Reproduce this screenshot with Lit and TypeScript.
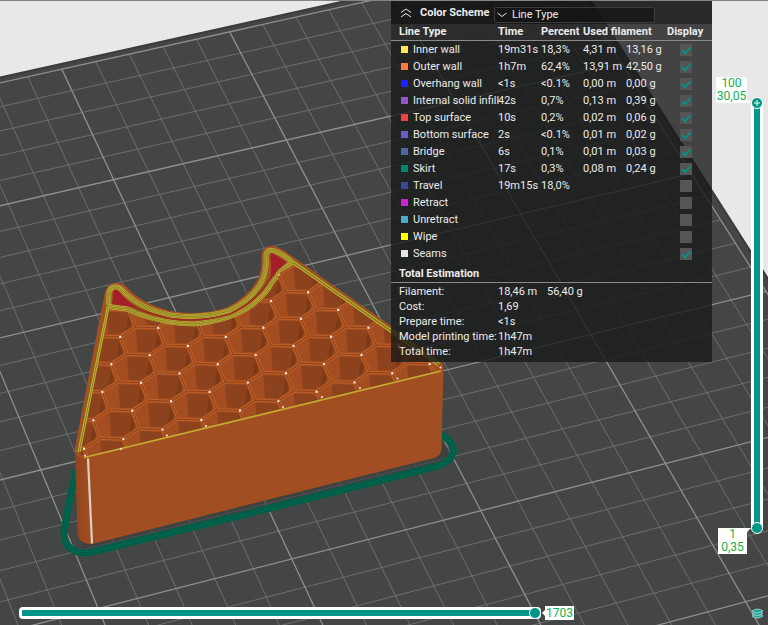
import { LitElement, html, svg, css } from "lit";
import { customElement, state } from "lit/decorators.js";

type Pt = [number, number];
type Anchor = [number, number, number, number];

/** Least-squares plane projection (u, v) -> (x, y) from a set of anchors. */
function project(anchors: Anchor[]): (u: number, v: number) => Pt {
  const m = Array.from({ length: 8 }, () => new Array<number>(9).fill(0));
  const add = (r: number[], rhs: number) => {
    for (let i = 0; i < 8; i++) {
      for (let j = 0; j < 8; j++) m[i][j] += r[i] * r[j];
      m[i][8] += r[i] * rhs;
    }
  };
  for (const [u, v, px, py] of anchors) {
    const x = px / 400;
    const y = py / 400;
    add([u, v, 1, 0, 0, 0, -u * x, -v * x], x);
    add([0, 0, 0, u, v, 1, -u * y, -v * y], y);
  }
  for (let i = 0; i < 8; i++) {
    let p = i;
    for (let r = i + 1; r < 8; r++) if (Math.abs(m[r][i]) > Math.abs(m[p][i])) p = r;
    [m[i], m[p]] = [m[p], m[i]];
    for (let r = 0; r < 8; r++) {
      if (r === i) continue;
      const f = m[r][i] / m[i][i];
      for (let c = i; c < 9; c++) m[r][c] -= f * m[i][c];
    }
  }
  const k = m.map((row, i) => row[8] / row[i]);
  return (u, v) => {
    const w = k[6] * u + k[7] * v + 1;
    return [((k[0] * u + k[1] * v + k[2]) / w) * 400, ((k[3] * u + k[4] * v + k[5]) / w) * 400];
  };
}

/** Build plate: one unit is five grid cells. */
const bed = project([
  [1, -1, 61.7, 69.3], [2, -1, 229.3, 32.3], [1, 0, 113.3, 179.3], [2, 0, 286.7, 140],
  [1, 1, 170, 296.7], [2, 1, 346.7, 255.7], [2, 3, 481, 510.7], [3, 3, 666, 464],
  [3, 4, 745, 601.7], [0, 2, 41, 470.5], [3, 2, 591, 334], [1, 3, 291, 559],
]);

/** Honeycomb infill: one unit is one cell. */
const comb = project([
  [0, -1, 120.3, 336.7], [4, -1, 271, 301], [5, -1, 308.3, 292.3], [0, 0, 111.3, 364.3],
  [4, 0, 263.3, 328], [6, 0, 338.3, 310], [0, 1, 102.5, 392], [3, 1, 217.7, 364.3],
  [7, 1, 368.3, 327.7], [0, 2, 93.3, 420], [0, 3, 84.3, 449], [1, 3, 123.3, 439],
  [6, 3, 316.7, 392], [9, 3, 429.7, 363.7],
]);

const f = (p: Pt) => `${p[0].toFixed(1)},${p[1].toFixed(1)}`;
const poly = (...pts: Pt[]) => `M${pts.map(f).join("L")}Z`;
const seg = (a: Pt, b: Pt) => `M${f(a)}L${f(b)}`;

const BED_U = 4;
const BED_V = -1;

function gridPaths() {
  let thin = "";
  let bold = "";
  for (let i = -25; i <= BED_U * 5; i++) {
    const s = seg(bed(i / 5, BED_V), bed(i / 5, 5.4));
    if (i % 5 === 0) bold += s;
    else thin += s;
  }
  for (let j = BED_V * 5; j <= 32; j++) {
    const s = seg(bed(-5, j / 5), bed(BED_U, j / 5));
    if (j % 5 === 0) bold += s;
    else thin += s;
  }
  return { thin, bold };
}

function combPaths() {
  let far = "";
  let side = "";
  let edge = "";
  let dots = "";
  for (let j = -5; j <= 6; j++) {
    for (let i = -4; i <= 12; i++) {
      const a = comb(i, j);
      const b = comb(i + 0.35, j - 0.25);
      const c = comb(i + 1, j);
      const d = comb(i + 1.35, j + 0.75);
      const e = comb(i + 1, j + 1);
      const g = comb(i + 0.35, j + 0.75);
      far += poly(b, c, [c[0] - 4, e[1] - 2], e, [b[0] + 2, g[1]]);
      side += poly(c, [c[0] + 4, c[1] + 9], [c[0] + 1, e[1] - 6], [c[0] - 4, e[1] - 2]);
      edge += poly(a, b, c, d, e, g);
      dots += `M${f(a)}h0.01`;
    }
  }
  return { far, side, edge, dots };
}

const GRID = gridPaths();
const COMB = combPaths();
const PLATE = poly(bed(-5, -1.045), bed(4.05, -1.045), bed(4.05, 5.5), bed(-5, 5.5));

const TOP =
  "M75 450L104.500 297Q106 284 115 283.500Q123 283 127 288Q141 304 170 311.500Q200 317 227 308Q250 296 258.500 279Q263 269 262 258Q261 247 271 246.500Q277 246 284 251L440 361Q445 366 442 371.500L88 458Q76 459 75 450Z";
const INNER =
  "M78.500 450L107 307L126 310.500L135 315Q165 327 196 326Q233 322 255 307Q270 294 274 283L279 278.500L278 274L296 263.500L439 366L441 370L88 456L80 455Z";
const UPPER_BAND =
  "M108.500 305L109 293Q110 287 115.500 287Q120 287 124 292Q140 308.500 170 315Q200 319.500 229 311Q253 299 262 281Q267 270 266 257Q266 250 271 250.500Q277 250 291 261";
const LOWER_BAND =
  "M108 306.500L127 309L137 313.500Q166 324 194 324Q230 321 252 305Q268 292 272 282L276 277.500L275.500 272.500L293 262";
const RED_LINE = "M130 305Q147 314 170 318.500Q200 323 230 314Q255 302 267 284L273 274";
const SKIRT =
  "M76 470Q69 500 65 526Q62 540 69 547Q76 554 90 552.500L241 515.500L438 466Q452 461 453.500 451Q453 441 441 435";

interface Row {
  name: string;
  color: string;
  time?: string;
  percent?: string;
  metres?: string;
  grams?: string;
  shown: boolean;
}

const ROWS: Row[] = [
  { name: "Inner wall", color: "#ffe64d", time: "19m31s", percent: "18,3%", metres: "4,31 m", grams: "13,16 g", shown: true },
  { name: "Outer wall", color: "#ff7d38", time: "1h7m", percent: "62,4%", metres: "13,91 m", grams: "42,50 g", shown: true },
  { name: "Overhang wall", color: "#1f1fff", time: "<1s", percent: "<0.1%", metres: "0,00 m", grams: "0,00 g", shown: true },
  { name: "Internal solid infill", color: "#9654cc", time: "42s", percent: "0,7%", metres: "0,13 m", grams: "0,39 g", shown: true },
  { name: "Top surface", color: "#f04040", time: "10s", percent: "0,2%", metres: "0,02 m", grams: "0,06 g", shown: true },
  { name: "Bottom surface", color: "#665cc7", time: "2s", percent: "<0.1%", metres: "0,01 m", grams: "0,02 g", shown: true },
  { name: "Bridge", color: "#4d66a6", time: "6s", percent: "0,1%", metres: "0,01 m", grams: "0,03 g", shown: true },
  { name: "Skirt", color: "#00876e", time: "17s", percent: "0,3%", metres: "0,08 m", grams: "0,24 g", shown: true },
  { name: "Travel", color: "#38489b", time: "19m15s", percent: "18,0%", shown: false },
  { name: "Retract", color: "#cd22d6", shown: false },
  { name: "Unretract", color: "#49adcf", shown: false },
  { name: "Wipe", color: "#ffff00", shown: false },
  { name: "Seams", color: "#e6e6e6", shown: true },
];

const TOTALS: string[][] = [
  ["Filament:", "18,46 m", "56,40 g"],
  ["Cost:", "1,69"],
  ["Prepare time:", "<1s"],
  ["Model printing time:", "1h47m"],
  ["Total time:", "1h47m"],
];

@customElement("plate-scene")
class PlateScene extends LitElement {
  static styles = css`
    :host { display: block; background: #e8e8e8; }
    svg { display: block; width: 100%; height: 100%; }
  `;

  render() {
    return html`<svg viewBox="0 0 768 625" preserveAspectRatio="xMidYMid slice" aria-hidden="true">
      ${svg`
      <defs>
        <clipPath id="inner"><path d=${INNER} /></clipPath>
        <linearGradient id="face" x1="75" x2="100" y1="0" y2="0" gradientUnits="userSpaceOnUse">
          <stop offset="0" stop-color="#8f451d" />
          <stop offset="0.5" stop-color="#a04c20" />
          <stop offset="1" stop-color="#a04e22" />
        </linearGradient>
      </defs>
      <path d=${PLATE} fill="#444645" stroke="#3a3c3b" stroke-width="2" />
      <path d=${GRID.thin} fill="none" stroke="#717372" stroke-width="0.9" />
      <path d=${GRID.bold} fill="none" stroke="#8d8f8e" stroke-width="1.3" />
      <path d="M78 470L82 549L104 549L444 464L450 450L441 440Z" fill="#3c3e3d" opacity="0.6" />
      <g fill="none" stroke-linejoin="round">
        <path d=${SKIRT} stroke="#00634c" stroke-width="7" />
        <path d=${SKIRT} stroke="#005340" stroke-width="4.400" />
        <path d=${SKIRT} stroke="#006b53" stroke-width="3" />
        <path d=${SKIRT} stroke="#005340" stroke-width="0.800" />
      </g>
      <path d="M75 450L77.500 534Q79 544 92 544L434 458Q441 456 441.500 449L443.500 368L88 452Z" fill="url(#face)" />
      <path d=${TOP} fill="#a64f22" stroke="#a9521f" stroke-width="1" />
      <g clip-path="url(#inner)">
        <path d=${INNER} fill="#a34d20" />
        <path d=${COMB.far} fill="#8b421d" />
        <path d=${COMB.side} fill="#7d3a17" />
        <path d=${COMB.edge} fill="none" stroke="#a34d20" stroke-width="5" />
        <path d=${COMB.edge} fill="none" stroke="#bf602b" stroke-width="3.200" />
        <path d=${COMB.edge} fill="none" stroke="#934519" stroke-width="1.200" />
        <path d=${COMB.dots} fill="none" stroke="#f3e9e2" stroke-width="2.400" stroke-linecap="round" />
      </g>
      <g fill="none" stroke-linejoin="round">
        <path d="M78.500 452L108 306" stroke="#7d6a1c" stroke-width="3.600" />
        <path d="M78 452L107.500 306M80 452L109 307" stroke="#bfb035" stroke-width="1.200" />
        <path d="M291 260L439 364" stroke="#7d6a1c" stroke-width="3.400" />
        <path d="M291 259.500L439.500 363.500M290 261.500L438 365.500" stroke="#bfb035" stroke-width="1.100" />
        <path d="M84 457.500L441 371" stroke="#c0ae31" stroke-width="1.600" />
        <path d=${RED_LINE} stroke="#8c5a1c" stroke-width="6" />
        ${[UPPER_BAND, LOWER_BAND].map(
          (d) => svg`
          <path d=${d} stroke="#bdb038" stroke-width="5" />
          <path d=${d} stroke="#85741f" stroke-width="3.600" />
          <path d=${d} stroke="#bdb038" stroke-width="2.400" />
          <path d=${d} stroke="#85741f" stroke-width="0.800" />`
        )}
        <path d=${RED_LINE} stroke="#a3291f" stroke-width="1.600" />
      </g>
      <path d="M114 290Q117 288 120 293Q127 302 137 307L130 306.500L112 304Z" fill="#a41f2a" />
      <path d="M271.500 252.500L287 262.500L278 270L270 281Q272 268 270.500 258Z" fill="#a41f2a" />
      <path d="M88 458.500L92 543.500" stroke="#d9cfc6" stroke-width="2.200" fill="none" />
      <path d="M85 455.500h0.010M121 449h0.010M167 435.500h0.010M206 426h0.010M283 407h0.010M322 397h0.010M360 388h0.010M397.500 378.500h0.010M440.500 367.500h0.010" stroke="#f3e9e2" stroke-width="2" stroke-linecap="round" />
      <path d="M0 0.500H768" stroke="#858585" stroke-width="1" />`}
    </svg>`;
  }
}

@customElement("legend-panel")
class LegendPanel extends LitElement {
  @state() private rows = ROWS;

  static styles = css`
    :host {
      display: block;
      width: 321px;
      color: #ececec;
      background: rgba(25, 25, 25, 0.8);
      font: 11px/17px Roboto, sans-serif;
    }
    .title { display: flex; align-items: center; height: 23px; padding: 0 8px; background: rgba(16, 16, 16, 0.5); }
    .fold { display: flex; width: 14px; height: 14px; padding: 0; border: 0; background: none; color: inherit; }
    .heading { margin: 0 0 0 7px; width: 74px; font-size: 11px; font-weight: 700; white-space: nowrap; }
    .scheme { display: grid; width: 161px; margin-top: 4px; align-items: center; }
    .scheme > * { grid-area: 1 / 1; }
    .scheme svg { margin-left: 3px; pointer-events: none; z-index: 1; }
    select {
      appearance: none;
      height: 16px;
      padding: 0 17px;
      border: 1px solid #3c3c3c;
      border-radius: 2px;
      background: rgba(20, 20, 20, 0.7);
      color: inherit;
      font: inherit;
      line-height: 14px;
    }
    table { width: 100%; border-collapse: collapse; table-layout: fixed; }
    th, td { padding: 0; height: 17px; line-height: 17px; text-align: left; font-weight: 400; white-space: nowrap; }
    thead th { height: 16px; line-height: 16px; font-weight: 700; }
    thead { background: rgba(70, 70, 70, 0.3); border-bottom: 1px solid #8a8a8a; }
    .c-name { width: 107px; }
    .c-time { width: 43px; }
    .c-percent { width: 42px; }
    .c-metres { width: 43px; }
    .c-grams { width: 41px; }
    .first { padding-left: 8px; }
    .name { display: flex; align-items: center; gap: 5px; padding-left: 10px; }
    .swatch { flex: none; width: 7px; height: 7px; }
    .box { padding-left: 13px; }
    input {
      appearance: none;
      display: block;
      width: 12px;
      height: 12px;
      margin: 0;
      background: #555;
    }
    input:checked::after {
      content: "";
      display: block;
      box-sizing: border-box;
      width: 9px;
      height: 5px;
      margin: 3px 0 0 2px;
      border: solid #0a8f82;
      border-width: 0 0 2px 2px;
      transform: rotate(-45deg);
    }
    .total { margin: 0; padding: 3px 8px 0; height: 17px; font-size: 11px; font-weight: 700; border-bottom: 1px solid #8a8a8a; }
    dl { display: grid; grid-template-columns: 99px 49px 1fr; grid-auto-rows: 15px; margin: 0; padding: 1px 8px 3px; line-height: 15px; white-space: nowrap; }
    dt, dd { margin: 0; }
    dt { grid-column: 1; }
  `;

  private toggle(i: number) {
    this.rows = this.rows.map((r, k) => (k === i ? { ...r, shown: !r.shown } : r));
  }

  render() {
    return html`
      <div class="title">
        <button class="fold" aria-label="Collapse">
          <svg width="14" height="14" viewBox="0 0 14 14" fill="none" stroke="currentColor"><path d="M2 6.500L7 3L12 6.500M2 11L7 7.500L12 11" /></svg>
        </button>
        <h2 class="heading" id="scheme-label">Color Scheme</h2>
        <div class="scheme">
          <select aria-labelledby="scheme-label"><option>Line Type</option></select>
          <svg width="10" height="8" viewBox="0 0 10 8" fill="none" stroke="#ececec"><path d="M0.500 2L5 5.500L9.500 2" /></svg>
        </div>
      </div>
      <table>
        <colgroup>
          <col class="c-name" /><col class="c-time" /><col class="c-percent" /><col class="c-metres" /><col class="c-grams" /><col />
        </colgroup>
        <thead>
          <tr>
            <th class="first">Line Type</th><th>Time</th><th>Percent</th><th colspan="2">Used filament</th><th>Display</th>
          </tr>
        </thead>
        <tbody>
          ${this.rows.map(
            (r, i) => html`<tr>
              <th scope="row">
                <label class="name" for="show-${i}"><span class="swatch" style="background:${r.color}"></span>${r.name}</label>
              </th>
              <td>${r.time}</td>
              <td>${r.percent}</td>
              <td>${r.metres}</td>
              <td>${r.grams}</td>
              <td class="box"><input id="show-${i}" type="checkbox" .checked=${r.shown} @change=${() => this.toggle(i)} /></td>
            </tr>`
          )}
        </tbody>
      </table>
      <h3 class="total">Total Estimation</h3>
      <dl>${TOTALS.map(([k, ...v]) => html`<dt>${k}</dt>${v.map((x) => html`<dd>${x}</dd>`)}`)}</dl>
    `;
  }
}

@customElement("app-root")
class AppRoot extends LitElement {
  static styles = css`
    :host { display: block; font: 12px/13px Roboto, sans-serif; }
    .stage {
      position: relative;
      display: grid;
      grid-template-columns: 1fr 56px;
      grid-template-rows: 1fr 24px;
      min-height: 100vh;
      overflow: hidden;
    }
    plate-scene { position: absolute; inset: 0; }
    legend-panel { position: relative; justify-self: end; align-self: start; margin-top: 1px; }
    .layers { position: relative; justify-self: end; width: 12px; margin: 97px 5px 67px 0; }
    .moves { position: relative; align-self: center; height: 12px; margin: 0 171px 0 19px; }
    .track { position: absolute; border: 3px solid #fff; border-radius: 4px; background: #009688; inset: 0; }
    .layers .track { inset: 3px 0; }
    input {
      appearance: none;
      position: absolute;
      inset: 0;
      width: 100%;
      height: 100%;
      margin: 0;
      background: none;
      pointer-events: none;
    }
    .layers input { writing-mode: vertical-lr; direction: rtl; }
    input::-webkit-slider-thumb {
      appearance: none;
      box-sizing: border-box;
      width: 12px;
      height: 12px;
      border: 1px solid #fff;
      border-radius: 50%;
      background: #009688;
      pointer-events: auto;
    }
    output {
      position: absolute;
      background: #fff;
      color: #12b04c;
      text-align: center;
      white-space: pre-line;
    }
    output::after { content: ""; position: absolute; border: 4px solid transparent; }
    .upper { right: 16px; top: -20px; width: 31px; height: 26px; }
    .lower { right: 16px; bottom: -20px; width: 29px; height: 26px; }
    .upper::after { right: -4px; bottom: 0; border-bottom-color: #fff; }
    .lower::after { right: -4px; top: 0; border-top-color: #fff; }
    .move { left: calc(100% + 4px); top: -1px; width: 29px; height: 14px; line-height: 14px; }
    .move::after { left: -7px; top: 3px; border-right-color: #fff; }
    .plus { position: absolute; left: 2px; top: 2px; pointer-events: none; }
    .stack { position: relative; justify-self: end; align-self: center; margin-right: 4px; padding: 0; width: 13px; height: 14px; border: 0; background: none; }
    .stack svg { display: block; }
  `;

  render() {
    return html`
      <main class="stage">
        <plate-scene></plate-scene>
        <legend-panel></legend-panel>
        <div class="layers">
          <div class="track"></div>
          <input type="range" min="1" max="100" value="1" aria-label="Bottom layer" />
          <input type="range" min="1" max="100" value="100" aria-label="Top layer" />
          <svg class="plus" width="8" height="8" viewBox="0 0 8 8" stroke="#fff"><path d="M4 1V7M1 4H7" /></svg>
          <output class="upper">${"100\n30,05"}</output>
          <output class="lower">${"1\n0,35"}</output>
        </div>
        <div class="moves">
          <div class="track"></div>
          <input type="range" min="1" max="1703" value="1703" aria-label="Move" />
          <output class="move">1703</output>
        </div>
        <button class="stack" aria-label="Layers">
          <svg width="13" height="14" viewBox="0 0 13 14" fill="#1aa597" stroke="#c8e6e2" stroke-width="0.700">
            <path d="M1 10Q6.500 6 12 10Q6.500 14 1 10Z" />
            <path d="M1 7.500Q6.500 3.500 12 7.500Q6.500 11.500 1 7.500Z" />
            <path d="M1 5Q6.500 1 12 5Q6.500 9 1 5Z" />
          </svg>
        </button>
      </main>
    `;
  }
}
